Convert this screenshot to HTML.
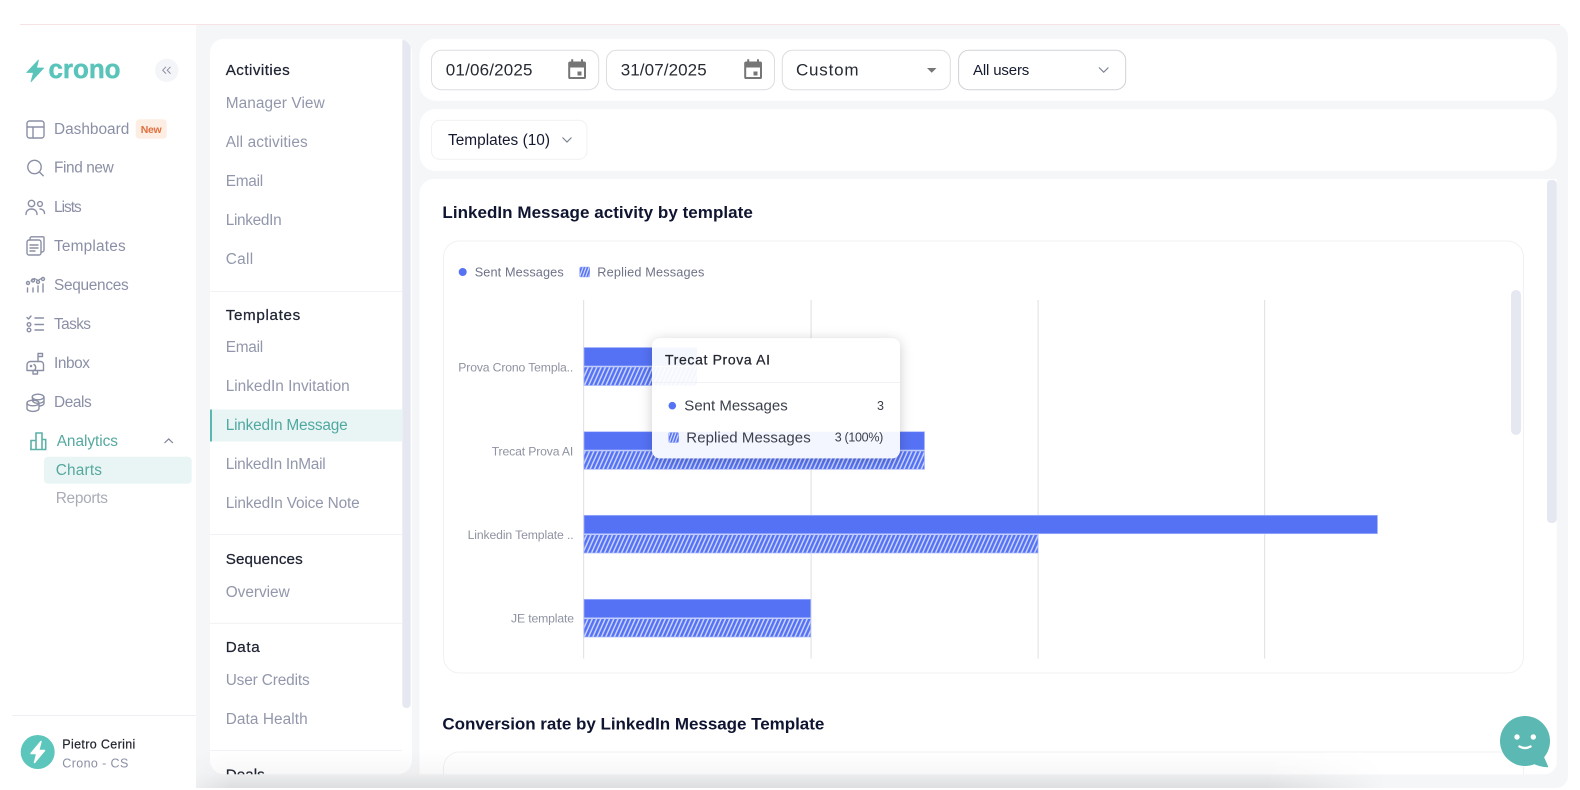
<!DOCTYPE html>
<html lang="en"><head><meta charset="utf-8"><title>Crono Analytics</title>
<style>
html,body{margin:0;padding:0;background:#fff;width:1580px;height:790px;overflow:hidden}
svg{display:block;position:absolute;left:0;top:0;filter:blur(.3px)}
text{font-family:"Liberation Sans",sans-serif}
.nav{font-size:15.4px;fill:#8a8fa5}
.sec{font-size:15.2px;fill:#1f2433;stroke:#1f2433;stroke-width:.25}
.sub{font-size:15.4px;fill:#9297ab}
.lg{font-size:12.7px;fill:#6d7287}
.yl{font-size:12.2px;fill:#8f93a1}
.h{font-size:17px;font-weight:700;fill:#0f1430}
.ic{fill:none;stroke:#8a8fa5;stroke-width:1.4;stroke-linecap:round;stroke-linejoin:round}
</style></head><body>
<svg width="1580" height="790" viewBox="0 0 1580 790" xmlns="http://www.w3.org/2000/svg">
<defs>
<pattern id="hatch" width="4.3" height="4.3" patternUnits="userSpaceOnUse" patternTransform="skewX(-24)">
<rect width="4.3" height="4.3" fill="#cdd6fc"/><rect width="2.7" height="4.3" fill="#5572f5"/>
</pattern>
<pattern id="hatch2" width="3" height="3" patternUnits="userSpaceOnUse" patternTransform="skewX(-20)">
<rect width="3" height="3" fill="#dfe5fd"/><rect width="1.8" height="3" fill="#5572f5"/>
</pattern>
<clipPath id="navclip"><rect x="210" y="38.7" width="202" height="735.5" rx="14"/></clipPath>
<linearGradient id="sh" x1="0" y1="0" x2="0" y2="1"><stop offset="0" stop-color="#000" stop-opacity="0"/><stop offset=".6" stop-color="#000" stop-opacity=".03"/><stop offset="1" stop-color="#000" stop-opacity=".095"/></linearGradient>
<linearGradient id="fade" x1="0" y1="0" x2="1" y2="0"><stop offset="0" stop-color="#fff" stop-opacity=".35"/><stop offset=".03" stop-color="#fff"/><stop offset=".9" stop-color="#fff"/><stop offset="1" stop-color="#fff" stop-opacity="0"/></linearGradient>
<mask id="fm"><rect x="196" y="750" width="1190" height="40" fill="url(#fade)"/></mask>
<filter id="tip" x="-15%" y="-25%" width="130%" height="150%"><feDropShadow dx="0" dy="2" stdDeviation="6" flood-color="#000" flood-opacity=".2"/></filter>
</defs>

<rect width="1580" height="790" fill="#fff"/>
<path d="M196 24.5H1556a12 12 0 0 1 12 12V776a12 12 0 0 1-12 12H196Z" fill="#f5f6f8"/>
<rect x="20" y="24" width="1540" height="1" fill="#f7e2e5"/>

<!-- Logo -->
<path d="M38.500 60 L26.700 72.500 H33.500 L31 81.700 L43.700 68 H36.500 Z" fill="#5ac4ba" stroke="#5ac4ba" stroke-width=".8" stroke-linejoin="round"/>
<text x="48.500" y="78" font-size="27" font-weight="700" fill="#5ac4ba" stroke="#5ac4ba" stroke-width=".5" textLength="72" lengthAdjust="spacingAndGlyphs">crono</text>
<circle cx="166.700" cy="70.300" r="11.700" fill="#f4f5f8"/>
<path d="M166 66.800l-3.300 3.400 3.300 3.400M170.500 66.800l-3.300 3.400 3.300 3.400" fill="none" stroke="#8a8fa5" stroke-width="1"/>

<!-- Sidebar icons -->
<g class="ic">
<rect x="27" y="121" width="17" height="17" rx="2.500"/><path d="M27 127h17M33 127v11"/>
<circle cx="34.500" cy="167" r="6.700"/><path d="M39.500 172l3.700 3.700"/>
<circle cx="31.500" cy="203.500" r="3.200"/><path d="M26 214.500c0-3.600 2.400-5.500 5.500-5.500s5.500 1.900 5.500 5.500"/><circle cx="40" cy="204" r="2.400"/><path d="M40 209c2.500 0 4.500 1.600 4.500 4.500"/>
<rect x="27" y="240" width="14" height="15" rx="2"/><path d="M30 240v-1.600a1.600 1.600 0 0 1 1.600-1.600H43a1 1 0 0 1 1 1V250a2 2 0 0 1-2 2h-1M30 245h8M30 248h8M30 251h5"/>
<path d="M31 281l3.500-2.500 3.500 2 4-2.500" stroke-width="1.200"/><circle cx="28" cy="283" r="1.500"/><circle cx="33" cy="280.500" r="1.500"/><circle cx="38" cy="282" r="1.500"/><circle cx="43" cy="279" r="1.500"/>
<path d="M27.500 288v4M33 288v4M38 286v6M43 284v8"/>
<path d="M27 317.500l1.500 1.500 2.500-3M35 318h8.500M35 324.500h8.500M35 330h8.500"/><circle cx="29" cy="324.500" r="1.800"/><circle cx="29" cy="330" r="1.800"/>
<path d="M30.500 361.500h10a3 3 0 0 1 3 3v6H27V365a3.500 3.500 0 0 1 3.500-3.500zM33 370.500v3.500h4.500v-3.500M34 364.500a3.500 3.500 0 0 1 0 6M38 361.500v-8h4.500v3H38"/><circle cx="31" cy="366" r=".6"/>
<ellipse cx="38" cy="397" rx="5.800" ry="2.800"/><path d="M32.500 397.500v3c0 1.500 2.500 2.800 5.500 2.800s6-1.300 6-2.800v-3.500M44 400.500v3c0 1.200-2 2.300-4.500 2.500"/><ellipse cx="33" cy="403" rx="6" ry="2.800"/><path d="M27 403v5.500c0 1.600 2.700 2.900 6 2.900s6-1.300 6-2.900V403"/>
</g>
<g fill="none" stroke="#5cb1a8" stroke-width="1.600"><path d="M31 449.500v-9h5v9M36 449.500V433h6v16.500M42 449.500v-10h3.700v10M30 449.500h16.500"/></g>
<path d="M164.500 443l4.200-4 4.200 4" fill="none" stroke="#7a8094" stroke-width="1.200"/>

<!-- Sidebar text -->
<text class="nav" x="54" y="134" textLength="75.300">Dashboard</text>
<rect x="135.700" y="119.300" width="31" height="19.400" rx="3.500" fill="#fdeee3"/>
<text x="140.700" y="133" font-size="10.500" font-weight="700" fill="#e0703f" textLength="21">New</text>
<text class="nav" x="54" y="172.700" textLength="59.700">Find new</text>
<text class="nav" x="54" y="212" textLength="27.700">Lists</text>
<text class="nav" x="54" y="251" textLength="71.700">Templates</text>
<text class="nav" x="54" y="290" textLength="74.700">Sequences</text>
<text class="nav" x="54" y="329" textLength="37">Tasks</text>
<text class="nav" x="54" y="368" textLength="36">Inbox</text>
<text class="nav" x="54" y="407" textLength="37.700">Deals</text>
<text x="56.700" y="446" font-size="15.400" fill="#55a89f" textLength="61.300">Analytics</text>
<rect x="44" y="456.700" width="147.700" height="27" rx="4" fill="#e9f5f4"/>
<text x="55.700" y="474.800" font-size="15.400" fill="#55a89f" textLength="46.300">Charts</text>
<text x="55.700" y="502.800" font-size="15.400" fill="#a9acb6" textLength="52.300">Reports</text>

<rect x="12" y="715" width="184" height="1" fill="#eff0f3"/>
<circle cx="37.700" cy="752" r="17" fill="#5cc6bc"/>
<path d="M41 741.500l-10 12h5.800L34.500 762.500l10-12h-5.900z" fill="#fff" stroke="#fff" stroke-width="1.500" stroke-linejoin="round"/>
<text x="62.300" y="748.500" font-size="12.500" fill="#23262f" stroke="#23262f" stroke-width=".2" textLength="73">Pietro Cerini</text>
<text x="62.300" y="767.500" font-size="12.500" fill="#8a8fa5" textLength="66">Crono - CS</text>

<!-- Nav panel -->
<rect x="210" y="38.700" width="202" height="735.500" rx="14" fill="#fff"/>
<g clip-path="url(#navclip)">
<rect x="402.300" y="38" width="8.400" height="670" rx="4" fill="#e6e8f1"/>
<rect x="210" y="291" width="192" height="1" fill="#f1f2f5"/>
<rect x="210" y="534" width="192" height="1" fill="#f1f2f5"/>
<rect x="210" y="622.800" width="192" height="1" fill="#f1f2f5"/>
<rect x="210" y="750" width="192" height="1" fill="#f1f2f5"/>
<rect x="210" y="409.500" width="192" height="32" fill="#e9f5f4"/><rect x="210" y="409.500" width="2" height="32" fill="#5ab8b1"/>
<text class="sec" x="225.700" y="75" textLength="64">Activities</text>
<text class="sub" x="225.700" y="108" textLength="99">Manager View</text>
<text class="sub" x="225.700" y="147" textLength="82">All activities</text>
<text class="sub" x="225.700" y="186" textLength="37.500">Email</text>
<text class="sub" x="225.700" y="225" textLength="56">LinkedIn</text>
<text class="sub" x="225.700" y="264" textLength="27.500">Call</text>
<text class="sec" x="225.700" y="320" textLength="74.500">Templates</text>
<text class="sub" x="225.700" y="352" textLength="37.500">Email</text>
<text class="sub" x="225.700" y="391" textLength="124">LinkedIn Invitation</text>
<text x="225.700" y="430" font-size="15.400" fill="#4fa8a0" textLength="122">LinkedIn Message</text>
<text class="sub" x="225.700" y="469" textLength="100">LinkedIn InMail</text>
<text class="sub" x="225.700" y="508" textLength="134">LinkedIn Voice Note</text>
<text class="sec" x="225.700" y="564" textLength="77">Sequences</text>
<text class="sub" x="225.700" y="597" textLength="64">Overview</text>
<text class="sec" x="225.700" y="652" textLength="34">Data</text>
<text class="sub" x="225.700" y="685" textLength="84">User Credits</text>
<text class="sub" x="225.700" y="724" textLength="82">Data Health</text>
<text class="sec" x="225.700" y="779.500" textLength="39">Deals</text>
</g>

<!-- Top panels -->
<rect x="419.600" y="38.700" width="1137.100" height="62" rx="16" fill="#fff"/>
<rect x="419.600" y="109" width="1137.100" height="62" rx="16" fill="#fff"/>
<g fill="#fff" stroke="#dcdde1">
<rect x="431.500" y="50.300" width="167.200" height="39.400" rx="10"/>
<rect x="606.500" y="50.300" width="168" height="39.400" rx="10"/>
<rect x="782.300" y="50.300" width="168" height="39.400" rx="10"/>
<rect x="958.600" y="50.300" width="167.100" height="39.400" rx="10" stroke="#d0d2d7"/>
<rect x="431.500" y="120.300" width="155.500" height="39" rx="8" stroke="#f0f1f3"/>
</g>
<text x="445.800" y="75.500" font-size="17" fill="#262a33" textLength="86.700">01/06/2025</text>
<text x="620.700" y="75.500" font-size="17" fill="#262a33" textLength="86">31/07/2025</text>
<text x="796" y="75.500" font-size="17" fill="#262a33" textLength="62.500">Custom</text>
<text x="973" y="75" font-size="15" fill="#151a30" textLength="56.300">All users</text>
<text x="448" y="145" font-size="15.400" fill="#151a30" textLength="102">Templates (10)</text>
<path d="M570 61.500a1.800 1.800 0 0 0-1.800 1.800V77.200A1.800 1.800 0 0 0 570 79h14.200a1.800 1.800 0 0 0 1.800-1.800V63.300A1.800 1.800 0 0 0 584.200 61.500H583v-2.200h-2v2.200h-7.800v-2.200h-2v2.200zM570.200 67.500h13.800v9.500h-13.800z" fill="#767676" fill-rule="evenodd"/><rect x="577.500" y="71.500" width="4" height="4" fill="#767676"/>
<g transform="translate(176,0)"><path d="M570 61.500a1.800 1.800 0 0 0-1.800 1.800V77.200A1.800 1.800 0 0 0 570 79h14.200a1.800 1.800 0 0 0 1.800-1.800V63.300A1.800 1.800 0 0 0 584.200 61.500H583v-2.200h-2v2.200h-7.800v-2.200h-2v2.200zM570.200 67.500h13.800v9.500h-13.800z" fill="#767676" fill-rule="evenodd"/><rect x="577.500" y="71.500" width="4" height="4" fill="#767676"/></g>
<path d="M927 68h9.500l-4.750 4.800z" fill="#767676"/>
<path d="M1099 67.500l4.700 4.700 4.700-4.700" fill="none" stroke="#7d8294" stroke-width="1.200"/>
<path d="M562.500 137.500l4.500 4.500 4.500-4.500" fill="none" stroke="#7d8294" stroke-width="1.200"/>

<!-- Main card -->
<path d="M419.600 193a14 14 0 0 1 14-14H1556.700V762a12 12 0 0 1-12 12.200H419.600Z" fill="#fff"/>
<rect x="1547" y="180" width="9.700" height="343" rx="4" fill="#e6e8f1"/>
<text class="h" x="442.400" y="218" textLength="310.400">LinkedIn Message activity by template</text>
<rect x="443.500" y="241" width="1080" height="432" rx="16" fill="#fff" stroke="#f0f1f3"/>
<rect x="1511" y="290" width="10" height="145" rx="5" fill="#e6e8f1"/>
<circle cx="462.700" cy="272" r="4" fill="#5572f5"/>
<text class="lg" x="474.700" y="276.300" textLength="89">Sent Messages</text>
<rect x="579.700" y="267" width="10" height="10" rx="1.500" fill="url(#hatch2)" stroke="#8fa2f8" stroke-width=".6"/>
<text class="lg" x="597.300" y="276.300" textLength="107">Replied Messages</text>

<g fill="#e4e4e6">
<rect x="583" y="300" width="1.200" height="358.500"/><rect x="810.500" y="300" width="1.200" height="358.500"/><rect x="1037.500" y="300" width="1.200" height="358.500"/><rect x="1264" y="300" width="1.200" height="358.500"/>
</g>
<g stroke="#a9b8fa" stroke-width=".7">
<rect x="584" y="347.500" width="113" height="18.500" fill="#5572f5"/><rect x="584" y="367" width="113" height="18.500" fill="url(#hatch)"/>
<rect x="584" y="431.700" width="340.500" height="18.300" fill="#5572f5"/><rect x="584" y="451" width="340.500" height="18.300" fill="url(#hatch)"/>
<rect x="584" y="515.300" width="793.500" height="18.400" fill="#5572f5"/><rect x="584" y="534.700" width="454" height="18.300" fill="url(#hatch)"/>
<rect x="584" y="599.300" width="226.700" height="18.400" fill="#5572f5"/><rect x="584" y="618.700" width="226.700" height="18.300" fill="url(#hatch)"/>
</g>
<text class="yl" x="458.300" y="371.300" textLength="115">Prova Crono Templa..</text>
<text class="yl" x="491.700" y="455.300" textLength="81.600">Trecat Prova AI</text>
<text class="yl" x="467.600" y="539" textLength="106">Linkedin Template ..</text>
<text class="yl" x="511" y="622.700" textLength="63">JE template</text>

<!-- Tooltip -->
<rect x="652" y="338.300" width="248" height="120" rx="8" fill="#fff" filter="url(#tip)"/>
<rect x="652" y="347.500" width="45" height="18.500" fill="#f1f4fe" opacity=".75"/>
<rect x="652" y="367" width="45" height="18.500" fill="url(#hatch)" opacity=".06"/>
<path d="M652 431.700H900V450a8 8 0 0 1-8 8.300H660a8 8 0 0 1-8-8.300Z" fill="#f3f6fe"/>
<rect x="652" y="382" width="248" height="1" fill="#f1f2f5"/>
<text x="665" y="364.500" font-size="14" fill="#23262f" stroke="#23262f" stroke-width=".25" textLength="105">Trecat Prova AI</text>
<circle cx="672.300" cy="405.700" r="3.800" fill="#5572f5"/>
<text x="684.300" y="410.700" font-size="15" fill="#3b3f4b" textLength="103.400">Sent Messages</text>
<text x="877" y="410" font-size="12.500" fill="#3b3f4b">3</text>
<rect x="668.700" y="432.500" width="10" height="10" rx="1.500" fill="url(#hatch2)" stroke="#8fa2f8" stroke-width=".6"/>
<text x="686.300" y="442.300" font-size="15" fill="#3b3f4b" textLength="124.400">Replied Messages</text>
<text x="834.700" y="441.500" font-size="12.500" fill="#3b3f4b" textLength="48.600">3 (100%)</text>

<!-- Second chart -->
<text class="h" x="442.400" y="729.500" textLength="381.900">Conversion rate by LinkedIn Message Template</text>
<path d="M443.500 774.500V768a16 16 0 0 1 16-16H1507.500a16 16 0 0 1 16 16V774.500" fill="#fff" stroke="#f0f1f3"/>

<!-- Bottom shadow -->
<rect x="196" y="750" width="1190" height="38" fill="url(#sh)" mask="url(#fm)"/>

<!-- Chat bubble -->
<circle cx="1525" cy="741" r="25" fill="#5bb8b2"/>
<path d="M1543 756L1547.700 766.700Q1540 766.500 1533 763Z" fill="#5bb8b2" stroke="#5bb8b2" stroke-linejoin="round"/>
<circle cx="1517" cy="737" r="2.700" fill="#fff"/><circle cx="1533.300" cy="737" r="2.700" fill="#fff"/>
<path d="M1519.500 746.500c3.500 2 7.500 2 11 0" fill="none" stroke="#fff" stroke-width="2.400" stroke-linecap="round"/>
</svg>
</body></html>
